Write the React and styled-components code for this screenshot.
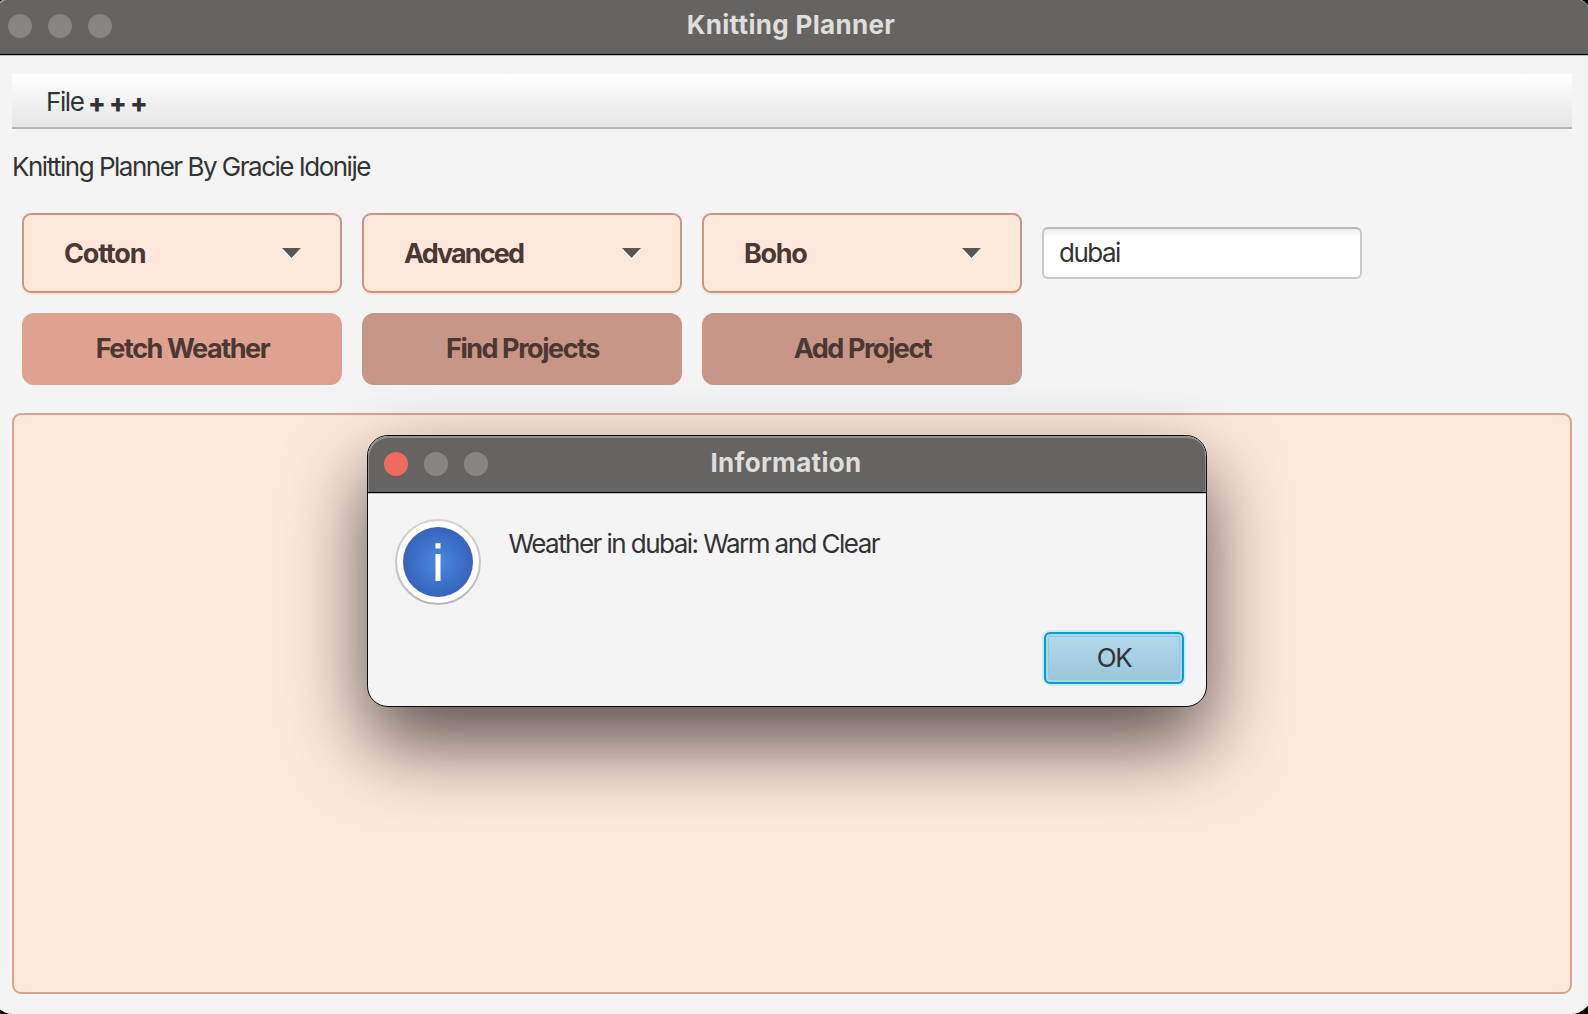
import React from 'react';
import styled, { createGlobalStyle } from 'styled-components';

const GlobalStyle = createGlobalStyle`
  *, *::before, *::after { box-sizing: border-box; }
  html, body { margin: 0; padding: 0; height: 100%; overflow: hidden; }
  body { background: #060606; font-family: Inter, "Liberation Sans", sans-serif; }
`;

const Desktop = styled.div`
  position: relative;
  width: 1588px;
  height: 1014px;
  overflow: hidden;
  background: #060606;
`;

const MainWindow = styled.section`
  display: flex;
  flex-direction: column;
  width: 1600px;
  height: 1017px;
  margin: -3px 0 0 -8px;
  border-radius: 21px;
  overflow: hidden;
  background: #f4f4f4;
`;

const Dialog = styled.section`
  position: absolute;
  left: 367px;
  top: 435px;
  width: 840px;
  height: 272px;
  display: flex;
  flex-direction: column;
  border: 1px solid #0b0b0a;
  border-radius: 21px;
  overflow: hidden;
  background: #f4f4f4;
  box-shadow: 0 36px 80px rgba(0, 0, 0, 0.66);
`;

const TitleBar = styled.header`
  flex: none;
  display: grid;
  grid-template-columns: 120px 1fr 120px;
  align-items: center;
  height: ${(p) => p.$height}px;
  padding: ${(p) => p.$drop || 0}px 16px 1px;
  background: #656462;
  border-bottom: 1px solid #000;
  border-radius: 20px 20px 0 0;
  box-shadow: inset 1px 2px 0 #8f928d, inset -1px 0 0 #8f928d, 0 1px 0 #bdbdbd;
`;

const Lights = styled.div`
  display: flex;
  gap: 16px;
`;

const Light = styled.span`
  width: 24px;
  height: 24px;
  border-radius: 50%;
  background: ${(p) => p.$color || '#868583'};
`;

const Title = styled.h1`
  margin: 0;
  padding: 0 2px ${(p) => p.$lift || 1}px 0;
  text-align: center;
  font-size: 26px;
  line-height: 32px;
  font-weight: 700;
  letter-spacing: 0.33px;
  color: #dfdedc;
`;

const Content = styled.main`
  flex: 1;
  display: flex;
  flex-direction: column;
  padding: 19px 20px 20px;
`;

const MenuBar = styled.nav`
  display: flex;
  align-items: center;
  height: 55px;
  padding: 0 0 0 34px;
  background: linear-gradient(#ffffff, #e5e5e5);
  border-bottom: 2px solid #b5b6b5;
  font-size: 26px;
  line-height: 32px;
  color: #333;
  letter-spacing: -1.4px;
`;

const MenuLabel = styled.span`
  padding-top: 3px;
  margin-right: 4.5px;
`;

const MenuPlus = styled.span`
  width: 21px;
  padding-top: 5px;
  font-weight: 800;
  font-size: 26px;
  letter-spacing: 0;
`;

const Byline = styled.p`
  margin: 21px 0 0;
  height: 34px;
  font-size: 26px;
  line-height: 34px;
  letter-spacing: -1.5px;
  color: #333;
`;

const Controls = styled.div`
  display: grid;
  grid-template-columns: repeat(4, 320px);
  gap: 20px;
  align-items: center;
  padding: 0 10px;
  margin-top: 29px;
`;

const Combo = styled.div`
  display: flex;
  align-items: center;
  height: 80px;
  padding: 8px 20px;
  border: 2px solid #cb9586;
  border-radius: 9px;
  background: #fde8da;
  box-shadow: 0 2px 0 #fde6d9;
`;

const ComboValue = styled.span`
  width: 216px;
  height: 60px;
  padding: 0 0 0 20px;
  background: #ffe8db;
  font-size: 27px;
  line-height: 62px;
  font-weight: 700;
  letter-spacing: ${(p) => p.$spacing}px;
  color: #4b3832;
`;

const ComboArrow = styled.svg`
  margin-left: 21px;
`;

const CityField = styled.div`
  height: 52px;
  padding: 0 15px;
  border: 2px solid #c9c9c9;
  border-top-color: #b9b9b9;
  border-radius: 6px;
  background: linear-gradient(#ececec, #fff 8px);
  font-size: 26px;
  line-height: 48px;
  letter-spacing: -1.5px;
  color: #333;
`;

const ActionButton = styled.button`
  height: 72px;
  border: 0;
  padding: 0 0 2px 1px;
  border-radius: 12px;
  background: ${(p) => (p.$active ? '#dfa290' : '#c89686')};
  font-family: inherit;
  font-size: 27px;
  font-weight: 700;
  letter-spacing: -1.45px;
  color: #4b3832;
`;

const ProjectList = styled.div`
  flex: 1;
  margin-top: 28px;
  border: 2px solid #dfa090;
  border-radius: 9px;
  background: #ffe8db;
`;

const DialogBody = styled.div`
  flex: 1;
  display: flex;
  align-items: flex-start;
  padding: 26px 26px 0 27px;
`;

const Message = styled.p`
  margin: 8px 0 0 27.5px;
  font-size: 26px;
  line-height: 34px;
  letter-spacing: -1.55px;
  color: #333;
`;

const DialogActions = styled.footer`
  display: flex;
  justify-content: flex-end;
  padding: 0 22px 22px;
`;

const OkButton = styled.button`
  width: 140px;
  height: 52px;
  padding: 0 0 1px;
  border: 2px solid #039ed3;
  border-radius: 6px;
  background: linear-gradient(#b4daeb, #9bc4d8);
  box-shadow: 0 0 0 2px #d0e9f2, inset 0 0 0 2px #a6d8ee, inset 0 0 0 3px #93c9e0;
  font-family: inherit;
  font-size: 26px;
  letter-spacing: -1.4px;
  color: #333;
`;

function InfoIcon() {
  return (
    <svg width="86" height="86" viewBox="0 0 86 86" aria-hidden="true">
      <defs>
        <radialGradient id="infoFill">
          <stop offset="0" stopColor="#4a8adc" />
          <stop offset="1" stopColor="#3763bd" />
        </radialGradient>
        <linearGradient id="infoRing" x1="0" y1="0" x2="0" y2="1">
          <stop offset="0" stopColor="#d4d4d4" />
          <stop offset="1" stopColor="#b9b9b9" />
        </linearGradient>
      </defs>
      <circle cx="43" cy="43" r="42" fill="#fff" stroke="url(#infoRing)" strokeWidth="2" />
      <circle cx="43" cy="43" r="35" fill="url(#infoFill)" />
      <rect x="40.5" y="24.2" width="5" height="5.3" fill="#fff" />
      <rect x="40.5" y="35" width="5" height="27" fill="#fff" />
    </svg>
  );
}

function ComboBox({ value, spacing }) {
  return (
    <Combo>
      <ComboValue $spacing={spacing}>{value}</ComboValue>
      <ComboArrow width="20" height="13" viewBox="0 0 20 13" aria-hidden="true">
        <path d="M1 2.5h19L10.5 13z" fill="#fff" />
        <path d="M1 1h19L10.5 11z" fill="#575654" />
      </ComboArrow>
    </Combo>
  );
}

function WindowLights({ closeColor }) {
  return (
    <Lights>
      <Light $color={closeColor} />
      <Light />
      <Light />
    </Lights>
  );
}

export default function App() {
  return (
    <>
      <GlobalStyle />
      <Desktop>
        <MainWindow>
          <TitleBar $height={58} $drop={2}>
            <WindowLights />
            <Title $lift={3}>Knitting Planner</Title>
          </TitleBar>
          <Content>
            <MenuBar>
              <MenuLabel>File</MenuLabel>
              <MenuPlus>+</MenuPlus>
              <MenuPlus>+</MenuPlus>
              <MenuPlus>+</MenuPlus>
            </MenuBar>
            <Byline>Knitting Planner By Gracie Idonije</Byline>
            <Controls>
              <ComboBox value="Cotton" spacing={-1.2} />
              <ComboBox value="Advanced" spacing={-1.9} />
              <ComboBox value="Boho" spacing={-1.3} />
              <CityField>dubai</CityField>
              <ActionButton $active>Fetch Weather</ActionButton>
              <ActionButton>Find Projects</ActionButton>
              <ActionButton>Add Project</ActionButton>
            </Controls>
            <ProjectList />
          </Content>
        </MainWindow>

        <Dialog role="dialog">
          <TitleBar $height={57}>
            <WindowLights closeColor="#ee6a5f" />
            <Title>Information</Title>
          </TitleBar>
          <DialogBody>
            <InfoIcon />
            <Message>Weather in dubai: Warm and Clear</Message>
          </DialogBody>
          <DialogActions>
            <OkButton>OK</OkButton>
          </DialogActions>
        </Dialog>
      </Desktop>
    </>
  );
}
